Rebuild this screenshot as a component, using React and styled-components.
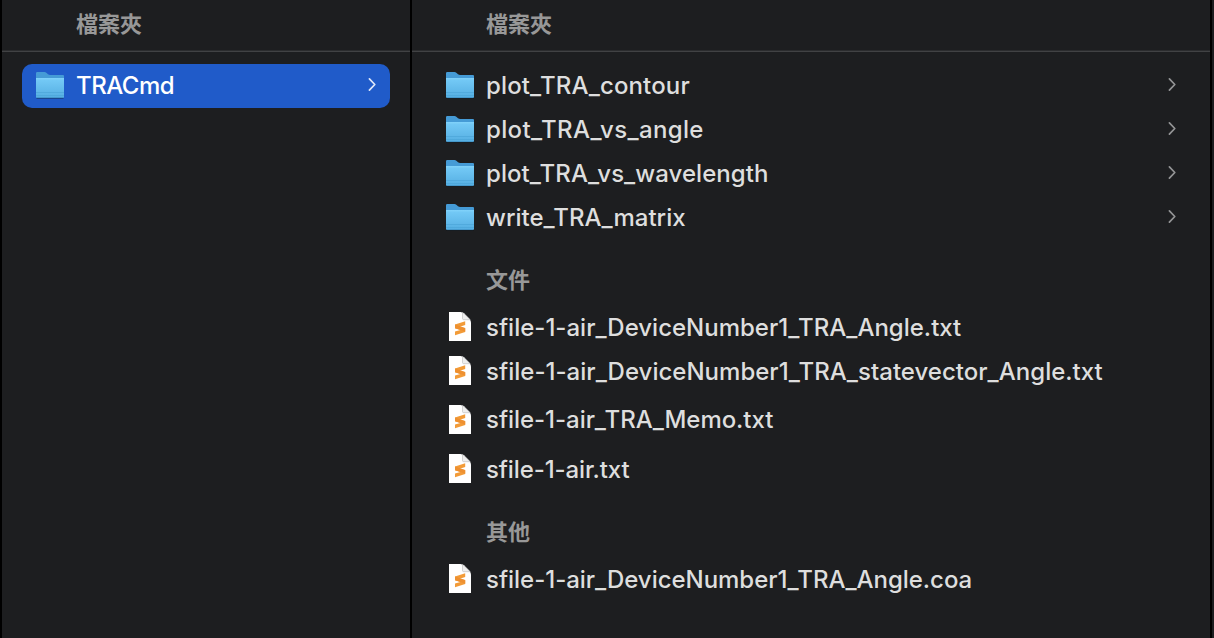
import React from 'react';
import styled, { createGlobalStyle } from 'styled-components';

const GlobalStyle = createGlobalStyle`
  * { box-sizing: border-box; }
  body { margin: 0; background: #1d1e20; overflow: hidden; }
`;

const Browser = styled.main`
  display: flex;
  width: 1214px;
  height: 638px;
  background: #1d1e20;
  border-left: 2px solid #000;
  font-family: Inter, "Noto Sans CJK TC", sans-serif;
  color: #dedede;
`;

const Column = styled.section`
  width: ${(p) => p.$width}px;
  flex: none;
  border-right: 2px solid #000;
`;

const ColumnHeader = styled.header`
  height: 52px;
  padding: 0 0 7px 74px;
  display: flex;
  align-items: center;
  border-bottom: 1px solid #414244;
  box-shadow: inset 0 -1px #2b2c2e;
  font: 700 22px "Noto Sans CJK TC", sans-serif;
  color: #989898;
`;

const List = styled.div`
  padding: 12px 20px 0;
`;

const GroupTitle = styled.h2`
  height: 66px;
  margin: 0;
  padding: 10px 0 0 54px;
  display: flex;
  align-items: center;
  font: 700 22px "Noto Sans CJK TC", sans-serif;
  line-height: 30px;
  color: #989898;
`;

const Row = styled.div`
  height: 44px;
  margin-top: ${(p) => p.$before || 0}px;
  padding: 0 12px 0 12px;
  display: flex;
  align-items: center;
  border-radius: 10px;
  background: ${(p) => (p.$selected ? '#205bc9' : 'transparent')};
  color: ${(p) => (p.$selected ? '#fff' : '#dedede')};
`;

const IconSlot = styled.span`
  width: 32px;
  height: 32px;
  margin: 0 10px ${(p) => p.$lift}px 0;
  flex: none;
  svg { display: block; }
`;

const Name = styled.span`
  flex: 1;
  white-space: nowrap;
  font-size: 24px;
  font-weight: 500;
  line-height: 30px;
  padding-bottom: ${(p) => p.$lift || 0}px;
  letter-spacing: ${(p) => p.$tracking || 0}px;
`;

const Arrow = styled.svg`
  flex: none;
  margin-bottom: 4px;
  color: ${(p) => (p.$selected ? '#dfe8fa' : '#949596')};
`;

function FolderIcon() {
  return (
    <svg width="32" height="32" viewBox="0 0 32 32">
      <defs>
        <linearGradient id="folderFront" x1="0" y1="0" x2="0" y2="1">
          <stop offset="0" stopColor="#82d3fb" />
          <stop offset=".12" stopColor="#72c8f5" />
          <stop offset="1" stopColor="#55aee2" />
        </linearGradient>
      </defs>
      <path d="M2.500 29.300h27" stroke="#000" strokeOpacity=".3" strokeWidth="1.400" />
      <path d="M2 28V4.200Q2 3 3.200 3H10.500q1 0 1.800.700L14 5.200q1 .800 2.200.800H29q1 0 1 1V28z" fill="#459bd6" />
      <path d="M2 9h28v18.800Q30 29 28.800 29H3.200Q2 29 2 27.800z" fill="url(#folderFront)" />
      <path d="M2 23.500h28M2 26.500h28" stroke="#4ca5d9" strokeOpacity=".7" strokeWidth="1" />
      <path d="M3 28.600h26" stroke="#3f8fc2" strokeWidth=".8" />
    </svg>
  );
}

function DocumentIcon() {
  return (
    <svg width="32" height="32" viewBox="0 0 32 32">
      <path d="M5 2H16.500Q18.500 2 20 3.500L25.500 9Q27 10.500 27 12.500V31H5z" fill="#fff" />
      <path d="M18.500 2.500V8.500q0 1.200 1.200 1.200h6.500L19.700 3.200z" fill="#eeeeee" stroke="#b9b9b9" strokeWidth=".6" />
      <path d="M11 14.400L21.200 11.300V15L15.800 16.700L21.200 18.300V22L11 25.300V21.600L16.400 19.900L11 18.300z" fill="#f29b38" />
      <path d="M11 14.600L21.200 18V21.600L11 18.300z" fill="#ee9030" />
    </svg>
  );
}

function Chevron({ selected }) {
  return (
    <Arrow $selected={selected} width="12" height="16" viewBox="0 0 12 16" fill="none">
      <path d="M3.400 2.800L8.800 8.500L3.400 14.200" stroke="currentColor" strokeWidth="1.700" strokeLinecap="round" strokeLinejoin="round" />
    </Arrow>
  );
}

function Entry({ name, kind = 'file', selected, before, tracking, lift }) {
  const folder = kind === 'folder';
  return (
    <Row $selected={selected} $before={before}>
      <IconSlot $lift={folder ? 2 : 4}>{folder ? <FolderIcon /> : <DocumentIcon />}</IconSlot>
      <Name $tracking={tracking} $lift={lift}>{name}</Name>
      {folder && <Chevron selected={selected} />}
    </Row>
  );
}

export default function App() {
  return (
    <>
      <GlobalStyle />
      <Browser>
        <Column $width={410}>
          <ColumnHeader>檔案夾</ColumnHeader>
          <List>
            <Entry kind="folder" name="TRACmd" tracking={-0.5} selected />
          </List>
        </Column>
        <Column $width={800}>
          <ColumnHeader>檔案夾</ColumnHeader>
          <List>
            <Entry kind="folder" name="plot_TRA_contour" tracking={0.14} />
            <Entry kind="folder" name="plot_TRA_vs_angle" tracking={0.36} />
            <Entry kind="folder" name="plot_TRA_vs_wavelength" tracking={0.06} />
            <Entry kind="folder" name="write_TRA_matrix" />
            <GroupTitle>文件</GroupTitle>
            <Entry name="sfile-1-air_DeviceNumber1_TRA_Angle.txt" />
            <Entry name="sfile-1-air_DeviceNumber1_TRA_statevector_Angle.txt" tracking={0.02} />
            <Entry name="sfile-1-air_TRA_Memo.txt" before={5} lift={2} tracking={-0.05} />
            <Entry name="sfile-1-air.txt" before={5} tracking={-0.12} />
            <GroupTitle>其他</GroupTitle>
            <Entry name="sfile-1-air_DeviceNumber1_TRA_Angle.coa" tracking={-0.03} />
          </List>
        </Column>
      </Browser>
    </>
  );
}
